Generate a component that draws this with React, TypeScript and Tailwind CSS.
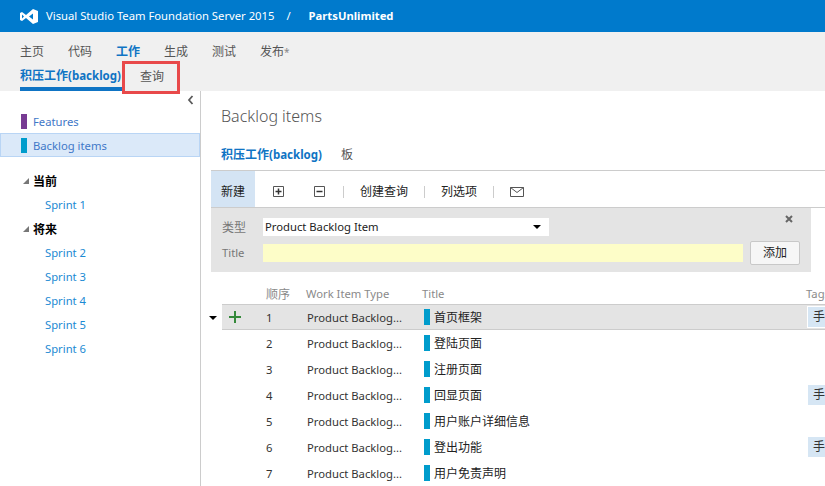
import React from "react";

const sprintsNow = ["Sprint 1"];
const sprintsNext = ["Sprint 2", "Sprint 3", "Sprint 4", "Sprint 5", "Sprint 6"];

const rows = [
  { n: 1, title: "首页框架", tag: true },
  { n: 2, title: "登陆页面", tag: false },
  { n: 3, title: "注册页面", tag: false },
  { n: 4, title: "回显页面", tag: true },
  { n: 5, title: "用户账户详细信息", tag: false },
  { n: 6, title: "登出功能", tag: true },
  { n: 7, title: "用户免责声明", tag: false },
];

function Caret() {
  return <div className="h-0 w-0 border-x-[4px] border-t-[4px] border-x-transparent border-t-black" />;
}

function SprintGroup({ label, items }: { label: string; items: string[] }) {
  return (
    <div>
      <div className="flex h-6 items-center pl-[22px]">
        <svg width="8" height="8" viewBox="0 0 8 8" className="mr-[3px]">
          <path d="M7 1v6H1z" fill="#777777" />
        </svg>
        <span className="pt-[2px] text-[12px] font-bold text-black">{label}</span>
      </div>
      {items.map((s) => (
        <div key={s} className="flex h-6 items-center pl-[45px] text-[11.25px] text-[#1b8ad3]">
          {s}
        </div>
      ))}
    </div>
  );
}

function Sidebar() {
  return (
    <aside className="w-[201px] shrink-0 border-r border-[#cccccc]">
      <div className="flex h-[18px] items-center justify-end pr-[6px]">
        <svg width="7" height="10" viewBox="0 0 7 10">
          <path d="M5.500 1 2 5l3.500 4" fill="none" stroke="#5a5a5a" strokeWidth="1.8" />
        </svg>
      </div>
      <div className="flex h-6 items-center pl-[21px] text-[11.25px] text-[#3f78c8]">
        <span className="mr-[6px] mt-px h-[15px] w-[6px] bg-[#773b93]" />
        <span className="pt-[2px]">Features</span>
      </div>
      <div className="flex h-6 items-center border border-[#b9d5f5] bg-[#dbe9f9] pl-[20px] text-[11.25px] text-[#3f78c8]">
        <span className="mr-[6px] mt-px h-[15px] w-[6px] bg-[#009ccc]" />
        <span className="pt-[2px]">Backlog items</span>
      </div>
      <div className="h-3" />
      <SprintGroup label="当前" items={sprintsNow} />
      <SprintGroup label="将来" items={sprintsNext} />
    </aside>
  );
}

function Toolbar() {
  return (
    <div className="flex h-[38px] items-center border-y border-[#cccccc] text-[12px] text-[#222222]">
      <div className="flex h-full w-[44px] items-center justify-center bg-[#d4e4f4] pt-[5px]">新建</div>
      <div className="flex items-center pt-[5px]">
        <svg width="11" height="11" viewBox="0 0 11 11" className="ml-[18px]">
          <path d="M.5.5h10v10H.5z" fill="none" stroke="#555555" />
          <path d="M2.500 5.500h6M5.500 2.500v6" stroke="#333333" strokeWidth="1.5" />
        </svg>
        <svg width="11" height="11" viewBox="0 0 11 11" className="ml-[30px]">
          <path d="M.5.5h10v10H.5z" fill="none" stroke="#555555" />
          <path d="M2.500 5.500h6" stroke="#333333" strokeWidth="1.5" />
        </svg>
        <span className="ml-[18px] h-3 w-px bg-[#cccccc]" />
        <span className="ml-4">创建查询</span>
        <span className="ml-4 h-3 w-px bg-[#cccccc]" />
        <span className="ml-4">列选项</span>
        <span className="ml-4 h-3 w-px bg-[#cccccc]" />
        <svg width="14" height="10" viewBox="0 0 14 10" className="ml-4">
          <path d="M.5.5h13v9H.5z" fill="none" stroke="#555555" />
          <path d="m.5.500 6.500 5 6.500-5" fill="none" stroke="#555555" />
        </svg>
      </div>
    </div>
  );
}

function AddForm() {
  return (
    <div className="relative mr-[14px] flex h-[64px] flex-col gap-2 bg-[#e4e4e4] pl-[11px] pt-[10px]">
      <div className="flex h-[18px] items-center">
        <span className="w-[41px] pt-px text-[12px] text-[#777777]">类型</span>
        <div className="flex h-[18px] w-[286px] items-center justify-between bg-white pl-[2px] pr-2 text-[11.25px] text-[#222222]">
          <span className="pt-px">Product Backlog Item</span>
          <Caret />
        </div>
      </div>
      <div className="flex h-[18px] items-center">
        <span className="w-[41px] text-[11.25px] text-[#777777]">Title</span>
        <div className="h-[18px] w-[480px] bg-[#fdfdc8]" />
        <button className="ml-[7px] flex h-6 w-[50px] items-center justify-center rounded-[2px] border border-[#c8c8c8] bg-[#f6f6f6] text-[12px] text-[#222222]">
          添加
        </button>
      </div>
      <svg width="8" height="8" viewBox="0 0 8 8" className="absolute right-[18px] top-[7px]">
        <path d="m1 1 6 6M7 1 1 7" stroke="#666666" strokeWidth="2" />
      </svg>
    </div>
  );
}

function BacklogRow({ n, title, tag, first }: { n: number; title: string; tag: boolean; first: boolean }) {
  return (
    <div
      className={`flex h-[26px] items-center overflow-hidden text-[#333333] ${
        first ? "ml-[11px] border-y border-[#cccccc] bg-[#e4e4e4]" : ""
      }`}
    >
      {first ? (
        <div className="flex w-[44px] shrink-0 items-center pl-[7px]">
          <svg width="12" height="12" viewBox="0 0 12 12">
            <path d="M6 0v12M0 6h12" stroke="#34893a" strokeWidth="2" />
          </svg>
        </div>
      ) : (
        <div className="w-[55px] shrink-0" />
      )}
      <span className="w-[41px] shrink-0 pt-[2px] text-[11.25px]">{n}</span>
      <span className="w-[117px] shrink-0 pt-[2px] text-[11.25px]">Product Backlog...</span>
      <span className="mr-1 h-4 w-[6px] shrink-0 bg-[#009ccc]" />
      <span className="pt-[2px] text-[12px] text-[#222222]">{title}</span>
      {tag && (
        <span
          className={`ml-auto flex h-5 w-[17px] shrink-0 items-center whitespace-nowrap bg-[#d6e6f4] pl-[5px] text-[12px] text-[#333333] ${
            first ? "shadow-[0_0_0_1px_white]" : ""
          }`}
        >
          手
        </span>
      )}
    </div>
  );
}

function BacklogTable() {
  return (
    <div className="relative mt-3">
      <div className="flex h-5 items-center overflow-hidden whitespace-nowrap pl-[55px] pt-px text-[#8a8a8a]">
        <span className="w-[40px] shrink-0 text-[12px]">顺序</span>
        <span className="w-[116px] shrink-0 text-[11.25px]">Work Item Type</span>
        <span className="w-[384px] shrink-0 text-[11.25px]">Title</span>
        <span className="text-[11.25px]">Tags</span>
      </div>
      {rows.map((r, i) => (
        <BacklogRow key={r.n} n={r.n} title={r.title} tag={r.tag} first={i === 0} />
      ))}
      <div className="absolute -left-[2px] top-[32px]">
        <Caret />
      </div>
    </div>
  );
}

function BacklogTabLabel() {
  return (
    <>
      积压工作<span className="text-[11.5px]">(backlog)</span>
    </>
  );
}

export default function App() {
  return (
    <div
      className="flex h-[486px] w-[825px] flex-col overflow-hidden bg-white"
      style={{ fontFamily: '"Noto Sans", "Noto Sans CJK SC", sans-serif' }}
    >
      <header className="flex h-8 shrink-0 items-center bg-[#007acc] pl-5 text-[11.25px] text-white">
        <svg width="18" height="15" viewBox="0 0 18 15" className="mr-[8px]">
          <path
            fillRule="evenodd"
            d="M13 0l5 2v11l-5 2-7-6-4 3-2-1V4l2-1 4 3zM13 4.500 9 7.500l4 3zM2 5.500v4l2-2z"
            fill="white"
          />
        </svg>
        <span>Visual Studio Team Foundation Server 2015</span>
        <span className="ml-3">/</span>
        <span className="ml-[18px] font-bold">PartsUnlimited</span>
      </header>
      <nav className="h-[59px] shrink-0 bg-[#f0f0f0] text-[12px] text-[#555555]">
        <div className="flex h-[35px] items-end gap-6 pb-[6px] pl-5">
          <span>主页</span>
          <span>代码</span>
          <span className="font-bold text-[#0f74c4]">工作</span>
          <span>生成</span>
          <span>测试</span>
          <span>
            发布<span className="text-[10px] text-[#888888]">*</span>
          </span>
        </div>
        <div className="flex h-6 items-stretch pl-5">
          <span className="w-[102px] whitespace-nowrap border-b-4 border-[#0f74c4] font-bold text-[#0f74c4]">
            <BacklogTabLabel />
          </span>
          <span className="relative pl-[18px] pt-px">
            查询
            <span className="absolute -top-[6px] left-0 h-[33px] w-[58px] border-[3px] border-[#e8494a]" />
          </span>
        </div>
      </nav>
      <div className="flex min-h-0 flex-1">
        <Sidebar />
        <main className="min-w-0 flex-1 pl-[10px]">
          <h1 className="mt-[13px] h-[24px] pl-[10px] text-[16px] font-light leading-6 text-[#555555]">Backlog items</h1>
          <div className="mt-4 flex h-[21px] items-center pl-[10px] text-[12px]">
            <span className="font-bold text-[#0f74c4]">
              <BacklogTabLabel />
            </span>
            <span className="ml-[19px] text-[#555555]">板</span>
          </div>
          <div className="h-[5px]" />
          <Toolbar />
          <AddForm />
          <BacklogTable />
        </main>
      </div>
    </div>
  );
}
